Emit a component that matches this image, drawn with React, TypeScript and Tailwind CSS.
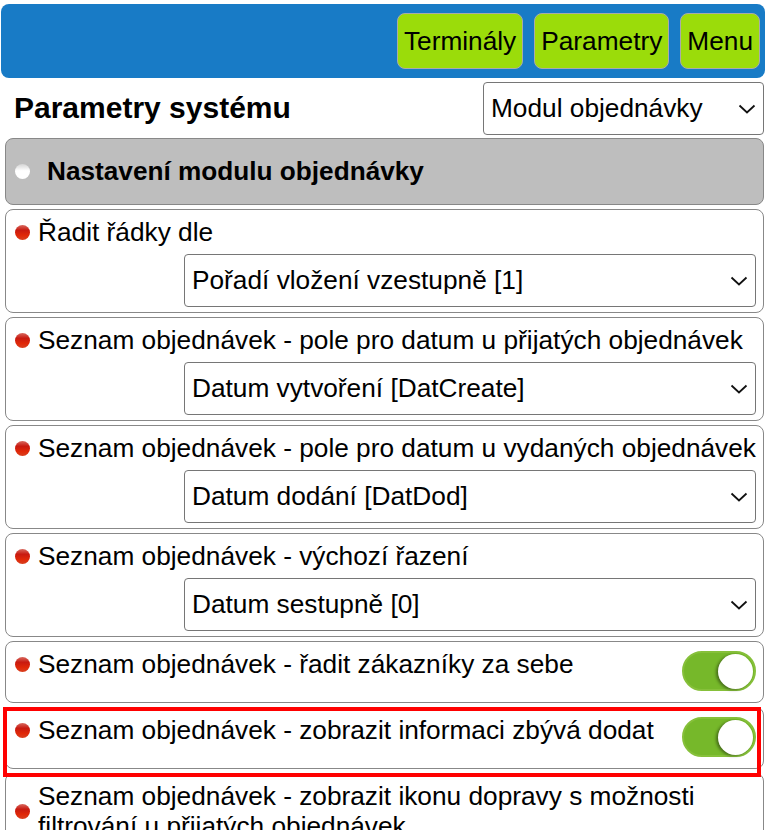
import React from 'react';

const Dot = ({ white }: { white?: boolean }) => (
    <span
        className={`inline-block w-[15px] h-[15px] rounded-full shrink-0 ${
            white
                ? 'bg-[linear-gradient(180deg,#d4d4d4_0%,#ffffff_45%,#ffffff_100%)]'
                : 'bg-[linear-gradient(180deg,#d86a60_0%,#c81a10_35%,#e02808_70%,#d84020_100%)]'
        }`}
    />
);

const Chevron = () => (
    <svg width="18" height="18" viewBox="0 0 18 18" className="shrink-0">
        <path d="M1.5 5.5 L9 12.5 L16.5 5.5" fill="none" stroke="#111" strokeWidth="1.8" />
    </svg>
);

const Select = ({ value, className }: { value: string; className: string }) => (
    <div className={`flex items-center justify-between bg-white border border-[#767676] rounded-[4px] pl-[7px] pr-[7px] text-black ${className}`}>
        <span className="-mt-[2px]">{value}</span>
        <Chevron />
    </div>
);

const Toggle = () => (
    <div className="w-[74px] h-[40px] mt-[3px] rounded-full bg-[#76b82a] border-2 border-[#86c03a] flex items-center justify-end pr-[1px] shrink-0">
        <div className="w-[35px] h-[35px] rounded-full bg-white shadow-[-2px_1px_3px_rgba(0,0,0,0.4)]" />
    </div>
);

const SelectRow = ({ label, value }: { label: string; value: string }) => (
    <div className="border border-[#888] rounded-[8px] h-[104px] pl-[9px] pr-[7px] pt-[6px] bg-white">
        <div className="flex items-center gap-[8px] h-[32px]">
            <Dot />
            <span className="whitespace-nowrap">{label}</span>
        </div>
        <div className="flex justify-end mt-[6px]">
            <Select value={value} className="w-[572px] h-[53px]" />
        </div>
    </div>
);

const ToggleRow = ({ label }: { label: string }) => (
    <div className="border border-[#888] rounded-[8px] h-[62px] pl-[9px] pr-[7px] pt-[6px] bg-white flex justify-between items-start">
        <div className="flex items-center gap-[8px] h-[32px]">
            <Dot />
            <span className="whitespace-nowrap">{label}</span>
        </div>
        <Toggle />
    </div>
);

const NavButton = ({ label }: { label: string }) => (
    <div className="h-[56px] flex items-center justify-center px-[6px] bg-[#9bdc0a] border border-[#aaa] rounded-[8px] text-black">
        {label}
    </div>
);

export default function App() {
    return (
        <div className="relative h-[830px] w-[765px] overflow-hidden bg-white text-[26.25px] leading-[32px] text-black font-['Liberation_Sans',Arial,sans-serif]">
            <div className="ml-px mt-[4px] h-[74px] bg-[#187bc6] rounded-[8px] flex justify-end items-center gap-[11px] pr-[5px]">
                <NavButton label="Terminály" />
                <NavButton label="Parametry" />
                <NavButton label="Menu" />
            </div>

            <div className="flex items-center justify-between pl-[14px] pr-px mt-[4px] h-[53px]">
                <h1 className="font-bold text-[30px] -mt-[2px]">Parametry systému</h1>
                <Select value="Modul objednávky" className="w-[281px] h-[53px]" />
            </div>

            <div className="ml-[5px] mr-px mt-[3px] flex flex-col gap-[4px]">
                <div className="h-[67px] bg-[#bebebe] border border-[#888] rounded-[8px] flex items-center pl-[9px] gap-[17px]">
                    <Dot white />
                    <span className="font-bold text-[26.2px] -mt-[2px]">Nastavení modulu objednávky</span>
                </div>
                <SelectRow label="Řadit řádky dle" value="Pořadí vložení vzestupně [1]" />
                <SelectRow label="Seznam objednávek - pole pro datum u přijatých objednávek" value="Datum vytvoření [DatCreate]" />
                <SelectRow label="Seznam objednávek - pole pro datum u vydaných objednávek" value="Datum dodání [DatDod]" />
                <SelectRow label="Seznam objednávek - výchozí řazení" value="Datum sestupně [0]" />
                <ToggleRow label="Seznam objednávek - řadit zákazníky za sebe" />
                <ToggleRow label="Seznam objednávek - zobrazit informaci zbývá dodat" />
                <div className="border border-[#888] rounded-[8px] pl-[9px] pr-[7px] pt-[7px] pb-[6px] bg-white flex items-center gap-[8px]">
                    <Dot />
                    <span className="leading-[30px]">Seznam objednávek - zobrazit ikonu dopravy s možnosti filtrování u přijatých objednávek</span>
                </div>
            </div>

            {/* zvyrazneni radku */}
            <div className="absolute left-[3px] top-[707px] w-[758px] h-[70px] border-[4px] border-[#ff0000] pointer-events-none" />
        </div>
    );
}
